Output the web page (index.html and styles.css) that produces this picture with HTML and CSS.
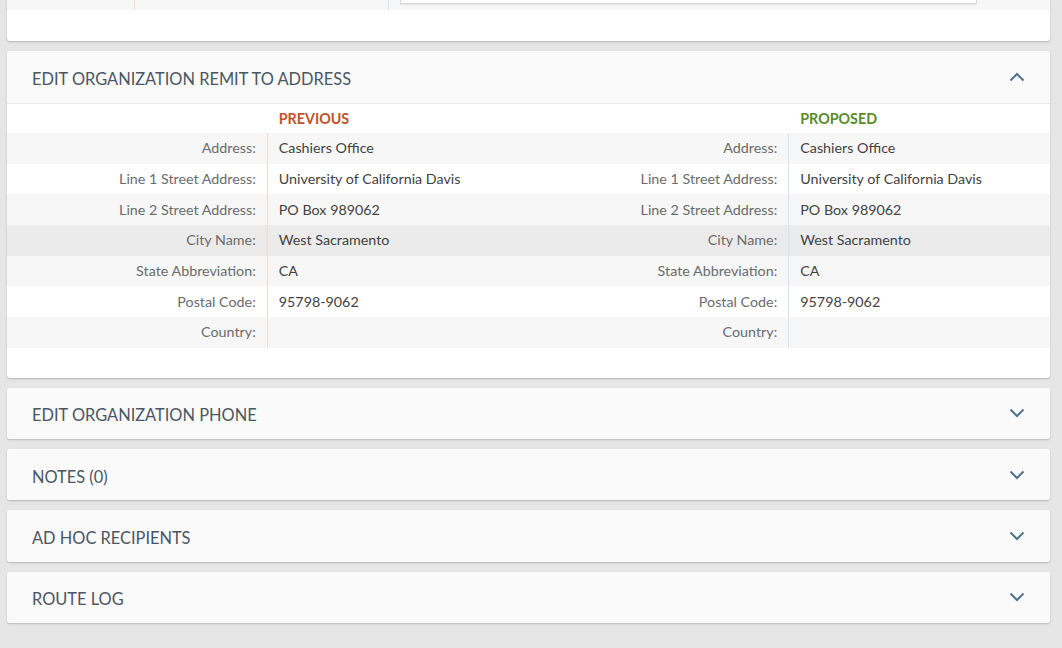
FILE: index.html
```html
<!DOCTYPE html>
<html>
<head>
<meta charset="utf-8">
<link rel="stylesheet" href="styles.css">
</head>
<body>
<div class="page">
  <section class="card card-cut">
    <div class="cut-row">
      <div class="cut-label"></div>
      <div class="cut-prev"></div>
      <div class="cut-prop"><div class="cut-input"></div></div>
    </div>
    <div class="cut-space"></div>
  </section>

  <section class="card">
    <header class="card-head">
      <h2 class="card-title">EDIT ORGANIZATION REMIT TO ADDRESS</h2>
      <svg class="chev" width="16" height="10" viewBox="0 0 16 10"><path d="M1.5 8.5 L8 2 L14.5 8.5" fill="none" stroke="#4f7386" stroke-width="2"/></svg>
    </header>
    <div class="compare">
      <div class="half prev">
        <div class="row head"><div class="lbl"></div><div class="val title-prev">PREVIOUS</div></div>
        <div class="row alt"><div class="lbl">Address:</div><div class="val">Cashiers Office</div></div>
        <div class="row"><div class="lbl">Line 1 Street Address:</div><div class="val">University of California Davis</div></div>
        <div class="row alt"><div class="lbl">Line 2 Street Address:</div><div class="val">PO Box 989062</div></div>
        <div class="row hover"><div class="lbl">City Name:</div><div class="val">West Sacramento</div></div>
        <div class="row alt"><div class="lbl">State Abbreviation:</div><div class="val">CA</div></div>
        <div class="row"><div class="lbl">Postal Code:</div><div class="val">95798-9062</div></div>
        <div class="row alt"><div class="lbl">Country:</div><div class="val"></div></div>
      </div>
      <div class="half prop">
        <div class="row head"><div class="lbl"></div><div class="val title-prop">PROPOSED</div></div>
        <div class="row alt"><div class="lbl">Address:</div><div class="val">Cashiers Office</div></div>
        <div class="row"><div class="lbl">Line 1 Street Address:</div><div class="val">University of California Davis</div></div>
        <div class="row alt"><div class="lbl">Line 2 Street Address:</div><div class="val">PO Box 989062</div></div>
        <div class="row hover"><div class="lbl">City Name:</div><div class="val">West Sacramento</div></div>
        <div class="row alt"><div class="lbl">State Abbreviation:</div><div class="val">CA</div></div>
        <div class="row"><div class="lbl">Postal Code:</div><div class="val">95798-9062</div></div>
        <div class="row alt"><div class="lbl">Country:</div><div class="val"></div></div>
      </div>
    </div>
  </section>

  <section class="card collapsed">
    <header class="card-head">
      <h2 class="card-title">EDIT ORGANIZATION PHONE</h2>
      <svg class="chev" width="16" height="10" viewBox="0 0 16 10"><path d="M1.5 1.5 L8 8 L14.5 1.5" fill="none" stroke="#4f7386" stroke-width="2"/></svg>
    </header>
  </section>
  <section class="card collapsed">
    <header class="card-head">
      <h2 class="card-title">NOTES (0)</h2>
      <svg class="chev" width="16" height="10" viewBox="0 0 16 10"><path d="M1.5 1.5 L8 8 L14.5 1.5" fill="none" stroke="#4f7386" stroke-width="2"/></svg>
    </header>
  </section>
  <section class="card collapsed">
    <header class="card-head">
      <h2 class="card-title">AD HOC RECIPIENTS</h2>
      <svg class="chev" width="16" height="10" viewBox="0 0 16 10"><path d="M1.5 1.5 L8 8 L14.5 1.5" fill="none" stroke="#4f7386" stroke-width="2"/></svg>
    </header>
  </section>
  <section class="card collapsed">
    <header class="card-head">
      <h2 class="card-title">ROUTE LOG</h2>
      <svg class="chev" width="16" height="10" viewBox="0 0 16 10"><path d="M1.5 1.5 L8 8 L14.5 1.5" fill="none" stroke="#4f7386" stroke-width="2"/></svg>
    </header>
  </section>
</div>
</body>
</html>
```

FILE: styles.css
```css
html, body {
  margin: 0;
  padding: 0;
  background: #e6e6e6;
  font-family: Lato, "Open Sans", "Liberation Sans", sans-serif;
  height: 648px;
  overflow: hidden;
}
.page {
  padding: 0 12px 0 7px;
  display: flex;
  flex-direction: column;
  gap: 10px;
}
.card {
  background: #ffffff;
  border-radius: 3px;
  box-shadow: 0 1px 2px rgba(0, 0, 0, 0.22);
}
.card-cut {
  margin-top: -20px;
}
.cut-row {
  display: flex;
  height: 30px;
  background: #f7f7f7;
}
.cut-label {
  width: 127px;
  border-right: 1px solid #f0dcd6;
}
.cut-prev {
  width: 253px;
  border-right: 1px solid #d9e4ea;
}
.cut-prop {
  flex: 1;
  padding-left: 11px;
}
.cut-input {
  width: 575px;
  height: 23px;
  background: #fff;
  border: 1px solid #d8d8d8;
  border-top: none;
  box-shadow: 0 1px 1px rgba(0,0,0,0.06);
}
.cut-space {
  height: 31px;
}
.card-head {
  display: flex;
  align-items: center;
  justify-content: space-between;
  height: 51.33px;
  box-sizing: border-box;
  padding: 3px 25px 0 25px;
  background: #fafafa;
  border-radius: 3px;
}
.card-head .chev {
  margin-top: -3px;
}
.card:not(.collapsed) .card-head {
  height: 53px;
  padding-top: 2px;
  border-bottom: 1px solid #ececec;
  border-radius: 3px 3px 0 0;
}
.card:not(.collapsed) .card-head .chev {
  margin-top: -2px;
}
.card-title {
  margin: 0;
  font-size: 16.4px;
  font-weight: 400;
  color: #4a5662;
  letter-spacing: 0;
}
.chev {
  display: block;
}
.compare {
  display: flex;
  padding-bottom: 30px;
}
.half {
  flex: 1;
}
.row {
  display: flex;
  height: 30.7px;
  align-items: center;
  font-size: 14.3px;
}
.row.alt { background: #f7f7f7; }
.row.hover { background: #ebebeb; }
.row.head { height: 29px; }
.lbl {
  width: 50%;
  box-sizing: border-box;
  text-align: right;
  padding-right: 11px;
  padding-bottom: 1px;
  color: #6b6b6b;
  align-self: stretch;
  display: flex;
  align-items: center;
  justify-content: flex-end;
}
.val {
  width: 50%;
  box-sizing: border-box;
  padding-left: 11px;
  padding-bottom: 1px;
  color: #424242;
  align-self: stretch;
  display: flex;
  align-items: center;
}
.prev .row:not(.head) .lbl { border-right: 1px solid #f0dcd6; }
.prop .row:not(.head) .lbl { border-right: 1px solid #d9e4ea; }
.title-prev { color: #c0522a; font-weight: 700; }
.title-prop { color: #5a8c26; font-weight: 700; }
```
